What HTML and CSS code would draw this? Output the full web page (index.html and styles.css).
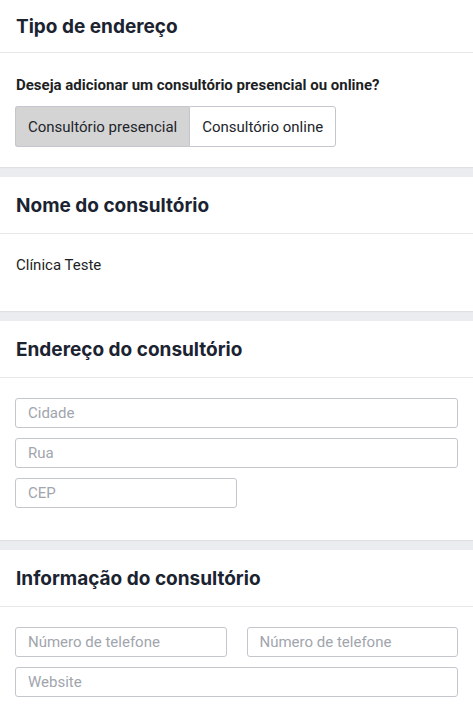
FILE: index.html
```html
<!DOCTYPE html>
<html lang="pt">
<head>
<meta charset="utf-8">
<title>Consultório</title>
<link rel="stylesheet" href="styles.css">
</head>
<body>
<div class="page">
  <section class="card card-first">
    <div class="card-header"><h2 class="card-title">Tipo de endereço</h2></div>
    <div class="card-body body-type">
      <p class="question">Deseja adicionar um consultório presencial ou online?</p>
      <div class="toggle">
        <button class="toggle-btn active" type="button">Consultório presencial</button>
        <button class="toggle-btn" type="button">Consultório online</button>
      </div>
    </div>
  </section>

  <section class="card">
    <div class="card-header"><h2 class="card-title">Nome do consultório</h2></div>
    <div class="card-body body-name">
      <p class="value">Clínica Teste</p>
    </div>
  </section>

  <section class="card">
    <div class="card-header"><h2 class="card-title">Endereço do consultório</h2></div>
    <div class="card-body">
      <input class="field" type="text" placeholder="Cidade">
      <input class="field" type="text" placeholder="Rua">
      <input class="field half" type="text" placeholder="CEP">
    </div>
  </section>

  <section class="card">
    <div class="card-header"><h2 class="card-title">Informação do consultório</h2></div>
    <div class="card-body">
      <div class="row">
        <input class="field" type="text" placeholder="Número de telefone">
        <input class="field" type="text" placeholder="Número de telefone">
      </div>
      <input class="field" type="text" placeholder="Website">
    </div>
  </section>
</div>
</body>
</html>
```
FILE: styles.css
```css
html, body {
  margin: 0;
  padding: 0;
  background: #ebecf0;
}
body {
  font-family: Roboto, "Liberation Sans", sans-serif;
  color: #1d1f24;
}
.page {
  display: flex;
  flex-direction: column;
  gap: 10px;
}
.card {
  background: #fff;
  box-shadow: 0 1px 1px rgba(0, 0, 0, 0.05);
}
.card-header {
  height: 56px;
  border-bottom: 1px solid #e8e8ea;
  display: flex;
  align-items: center;
  padding: 0 16px;
}
.card-first .card-header {
  height: 52px;
}
.card-title {
  margin: 0;
  font-family: Inter, "Noto Sans", sans-serif;
  font-weight: 700;
  font-size: 19px;
  letter-spacing: 0;
  color: #1b2331;
}
.card-body {
  padding: 20px 15px 22px 15px;
  display: flex;
  flex-direction: column;
}
.body-type {
  padding-top: 21px;
  padding-bottom: 20px;
}
.question {
  margin: 0 0 10px 1px;
  font-weight: 700;
  font-size: 15px;
  line-height: 22px;
  color: #1d1f24;
}
.toggle {
  display: flex;
}
.toggle-btn {
  height: 41px;
  padding: 0 12px;
  border: 1px solid #c3c6cd;
  background: #fff;
  font-family: Roboto, "Liberation Sans", sans-serif;
  font-size: 15px;
  color: #22252b;
  cursor: pointer;
}
.toggle-btn:first-child {
  border-radius: 3px 0 0 3px;
  border-right: none;
}
.toggle-btn:last-child {
  border-radius: 0 3px 3px 0;
}
.toggle-btn.active {
  background: #d4d4d4;
}
.body-name {
  padding: 20px 16px 35px;
}
.value {
  margin: 0;
  font-size: 15px;
  line-height: 22px;
  color: #1d1f24;
}
.field {
  box-sizing: border-box;
  height: 30px;
  margin: 0 0 10px 0;
  padding: 0 12px;
  border: 1px solid #c4c6cd;
  border-radius: 3px;
  font-family: Roboto, "Liberation Sans", sans-serif;
  font-size: 15px;
  color: #1d1f24;
  background: #fff;
  width: 100%;
}
.field::placeholder {
  color: #a1a5ad;
}
.field.half {
  width: 50%;
}
.row {
  display: flex;
  gap: 20px;
}
.row .field {
  flex: 1;
  min-width: 0;
}
```
